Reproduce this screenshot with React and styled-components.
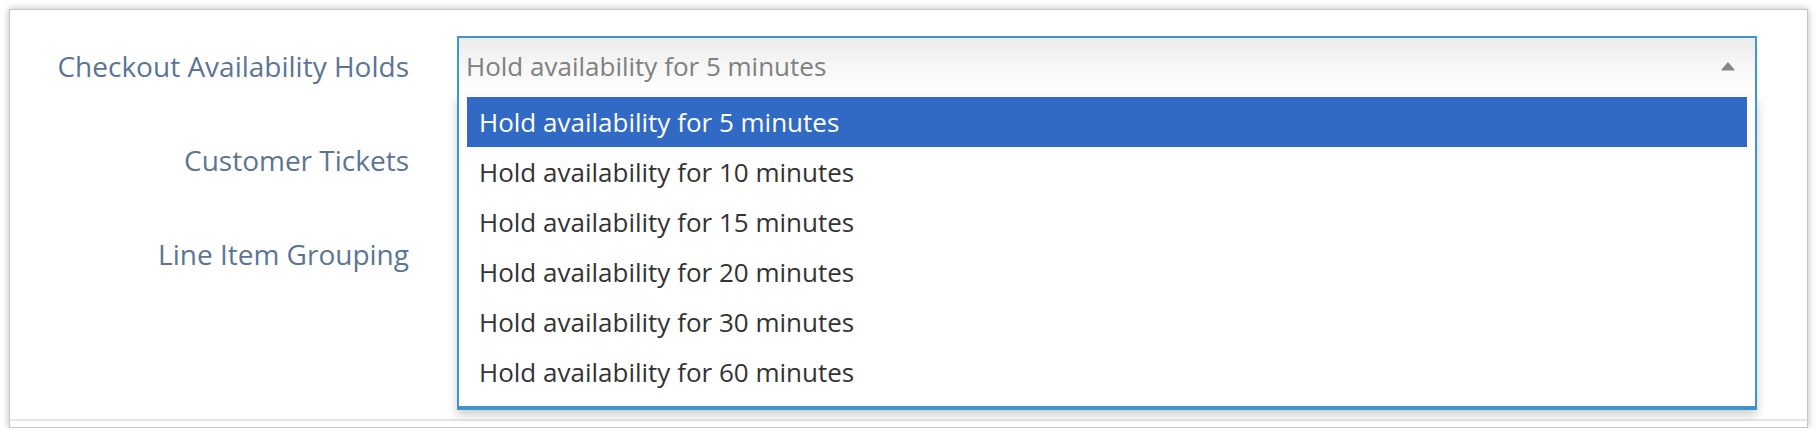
import React from "react";
import styled, { createGlobalStyle, css } from "styled-components";

const GlobalStyle = createGlobalStyle`
  html, body { margin: 0; padding: 0; background: #fff; }
  body { font-family: "Open Sans", "Liberation Sans", Arial, sans-serif; }
  * { box-sizing: border-box; }
`;

const Page = styled.div`
  padding: 9px 10px 0 9px;
`;

const Panel = styled.div`
  background: #fff;
  border: 1px solid #c6c6c6;
  box-shadow: 0 0 7px rgba(0, 0, 0, 0.28);
  padding-bottom: 6px;
`;

const Form = styled.div`
  height: 411px;
  padding-top: 26px;
  border-bottom: 2px solid #e6e6e6;
  display: grid;
  grid-template-columns: 399px 1300px;
  column-gap: 48px;
  grid-auto-rows: 94px;
  align-content: start;
`;

const Label = styled.div`
  font-size: 28px;
  line-height: 40px;
  padding-top: 10px;
  color: #5b7595;
  text-align: right;
  white-space: nowrap;
`;

const Field = styled.div`
  position: relative;
  align-self: start;
`;

const Choice = styled.div`
  height: 59px;
  display: flex;
  align-items: center;
  justify-content: space-between;
  padding: 0 20px 0 7px;
  font-size: 26px;
  line-height: 57px;
  color: #808080;
  border: 2px solid #4195cd;
  border-bottom: none;
  background: linear-gradient(to bottom, #ebebeb 0%, #f6f6f6 45%, #ffffff 100%);
  ${(p) =>
    !p.$open &&
    css`
      border: 2px solid #aaaaaa;
      background: linear-gradient(to bottom, #ffffff 0%, #eeeeee 100%);
    `}
`;

const ChoiceText = styled.span`
  white-space: nowrap;
  padding-bottom: 1px;
`;

const Drop = styled.ul`
  position: absolute;
  top: 100%;
  left: 0;
  right: 0;
  z-index: 10;
  margin: 0;
  list-style: none;
  background: #fff;
  border: 2px solid #4195cd;
  border-top: none;
  border-bottom-width: 4px;
  padding: 2px 8px 9px 8px;
  box-shadow: 0 5px 10px rgba(0, 0, 0, 0.2);
`;

const Option = styled.li`
  height: 50px;
  line-height: 50px;
  padding-left: 12px;
  font-size: 26px;
  white-space: nowrap;
  color: ${(p) => (p.$active ? "#ffffff" : "#333333")};
  background: ${(p) => (p.$active ? "#316ac5" : "transparent")};
`;

const Arrow = () => (
  <svg width="14" height="9" viewBox="0 0 14 9">
    <path d="M7 1 L13 8 H1 Z" fill="#888" stroke="#888" strokeWidth="1.2" strokeLinejoin="round" />
  </svg>
);

const options = [5, 10, 15, 20, 30, 60].map((m) => `Hold availability for ${m} minutes`);

export default function App() {
  return (
    <>
      <GlobalStyle />
      <Page>
        <Panel>
          <Form>
            <Label>Checkout Availability Holds</Label>
            <Field>
              <Choice $open>
                <ChoiceText>{options[0]}</ChoiceText>
                <Arrow />
              </Choice>
              <Drop>
                {options.map((o, i) => (
                  <Option key={o} $active={i === 0}>
                    {o}
                  </Option>
                ))}
              </Drop>
            </Field>

            <Label>Customer Tickets</Label>
            <Field />

            <Label>Line Item Grouping</Label>
            <Field />
          </Form>
        </Panel>
      </Page>
    </>
  );
}
